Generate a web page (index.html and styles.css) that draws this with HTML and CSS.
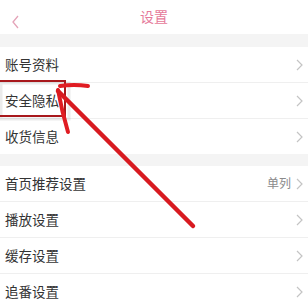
FILE: index.html
```html
<!DOCTYPE html>
<html lang="zh-CN">
<head>
    <meta charset="UTF-8">
    <meta name="viewport" content="width=device-width, initial-scale=1.0">
    <title>设置</title>
    <link rel="stylesheet" href="styles.css">
</head>
<body>
    <div class="page">
        <div class="header">
            <span class="back">
                <svg width="9" height="14" viewBox="0 0 9 14"><path d="M7 1 L2 7 L7 13" fill="none" stroke="#e4a3b8" stroke-width="1.3"/></svg>
            </span>
            <span class="title">设置</span>
        </div>

        <div class="group">
            <div class="row"><span class="label">账号资料</span><svg class="arrow" viewBox="0 0 7 12"><path d="M1 1 L6 6 L1 11"/></svg></div>
            <div class="row"><span class="label">安全隐私</span><svg class="arrow" viewBox="0 0 7 12"><path d="M1 1 L6 6 L1 11"/></svg></div>
            <div class="row"><span class="label">收货信息</span><svg class="arrow" viewBox="0 0 7 12"><path d="M1 1 L6 6 L1 11"/></svg></div>
        </div>

        <div class="group">
            <div class="row"><span class="label">首页推荐设置</span><span class="value">单列</span><svg class="arrow" viewBox="0 0 7 12"><path d="M1 1 L6 6 L1 11"/></svg></div>
            <div class="row"><span class="label">播放设置</span><svg class="arrow" viewBox="0 0 7 12"><path d="M1 1 L6 6 L1 11"/></svg></div>
            <div class="row"><span class="label">缓存设置</span><svg class="arrow" viewBox="0 0 7 12"><path d="M1 1 L6 6 L1 11"/></svg></div>
            <div class="row"><span class="label">追番设置</span><svg class="arrow" viewBox="0 0 7 12"><path d="M1 1 L6 6 L1 11"/></svg></div>
        </div>

        <!-- hand drawn annotation on top of the screenshot -->
        <svg class="markup" width="308" height="306" viewBox="0 0 308 306">
            <rect x="1" y="83" width="68" height="36" fill="none" stroke="rgba(0,0,0,0.08)" stroke-width="3"/>
            <rect x="-2" y="81" width="67" height="35" fill="none" stroke="#a8181c" stroke-width="2"/>
            <path d="M60 86 Q74 84 88 86" fill="none" stroke="#e01c22" stroke-width="4" stroke-linecap="round"/>
            <path d="M58 90 Q62 112 68 132" fill="none" stroke="#e01c22" stroke-width="4" stroke-linecap="round"/>
            <path d="M58 91 L193 226" fill="none" stroke="#d81a20" stroke-width="4.5" stroke-linecap="round"/>
        </svg>
    </div>
</body>
</html>
```

FILE: styles.css
```css
body {
    margin: 0;
    font-family: "Noto Sans CJK SC", "Noto Sans", sans-serif;
    background-color: #f4f4f4;
}
.page {
    position: relative;
    width: 308px;
    height: 306px;
    overflow: hidden;
}
.header {
    height: 34px;
    background-color: #fff;
    display: flex;
    align-items: center;
    justify-content: center;
    position: relative;
}
.header .back {
    position: absolute;
    left: 11px;
    top: 10px;
}
.header .title {
    color: #e6799a;
    font-size: 14px;
    margin-top: -3px;
}
.group {
    background-color: #fff;
    margin-top: 13px;
}
.group + .group {
    margin-top: 12px;
}
.row {
    height: 35px;
    display: flex;
    align-items: center;
    padding: 0 5px 0 5px;
    border-bottom: 1px solid #efefef;
}
.row:last-child {
    border-bottom: none;
}
.label {
    flex: 1;
    font-size: 13.5px;
    color: #333;
    margin-top: -2px;
}
.value {
    font-size: 12px;
    color: #8a8a8a;
    margin-right: 5px;
    margin-top: -2px;
}
.arrow {
    width: 7px;
    height: 12px;
    fill: none;
    stroke: #c4c4c4;
    stroke-width: 1.2;
}
.markup {
    position: absolute;
    left: 0;
    top: 0;
    pointer-events: none;
}
```
